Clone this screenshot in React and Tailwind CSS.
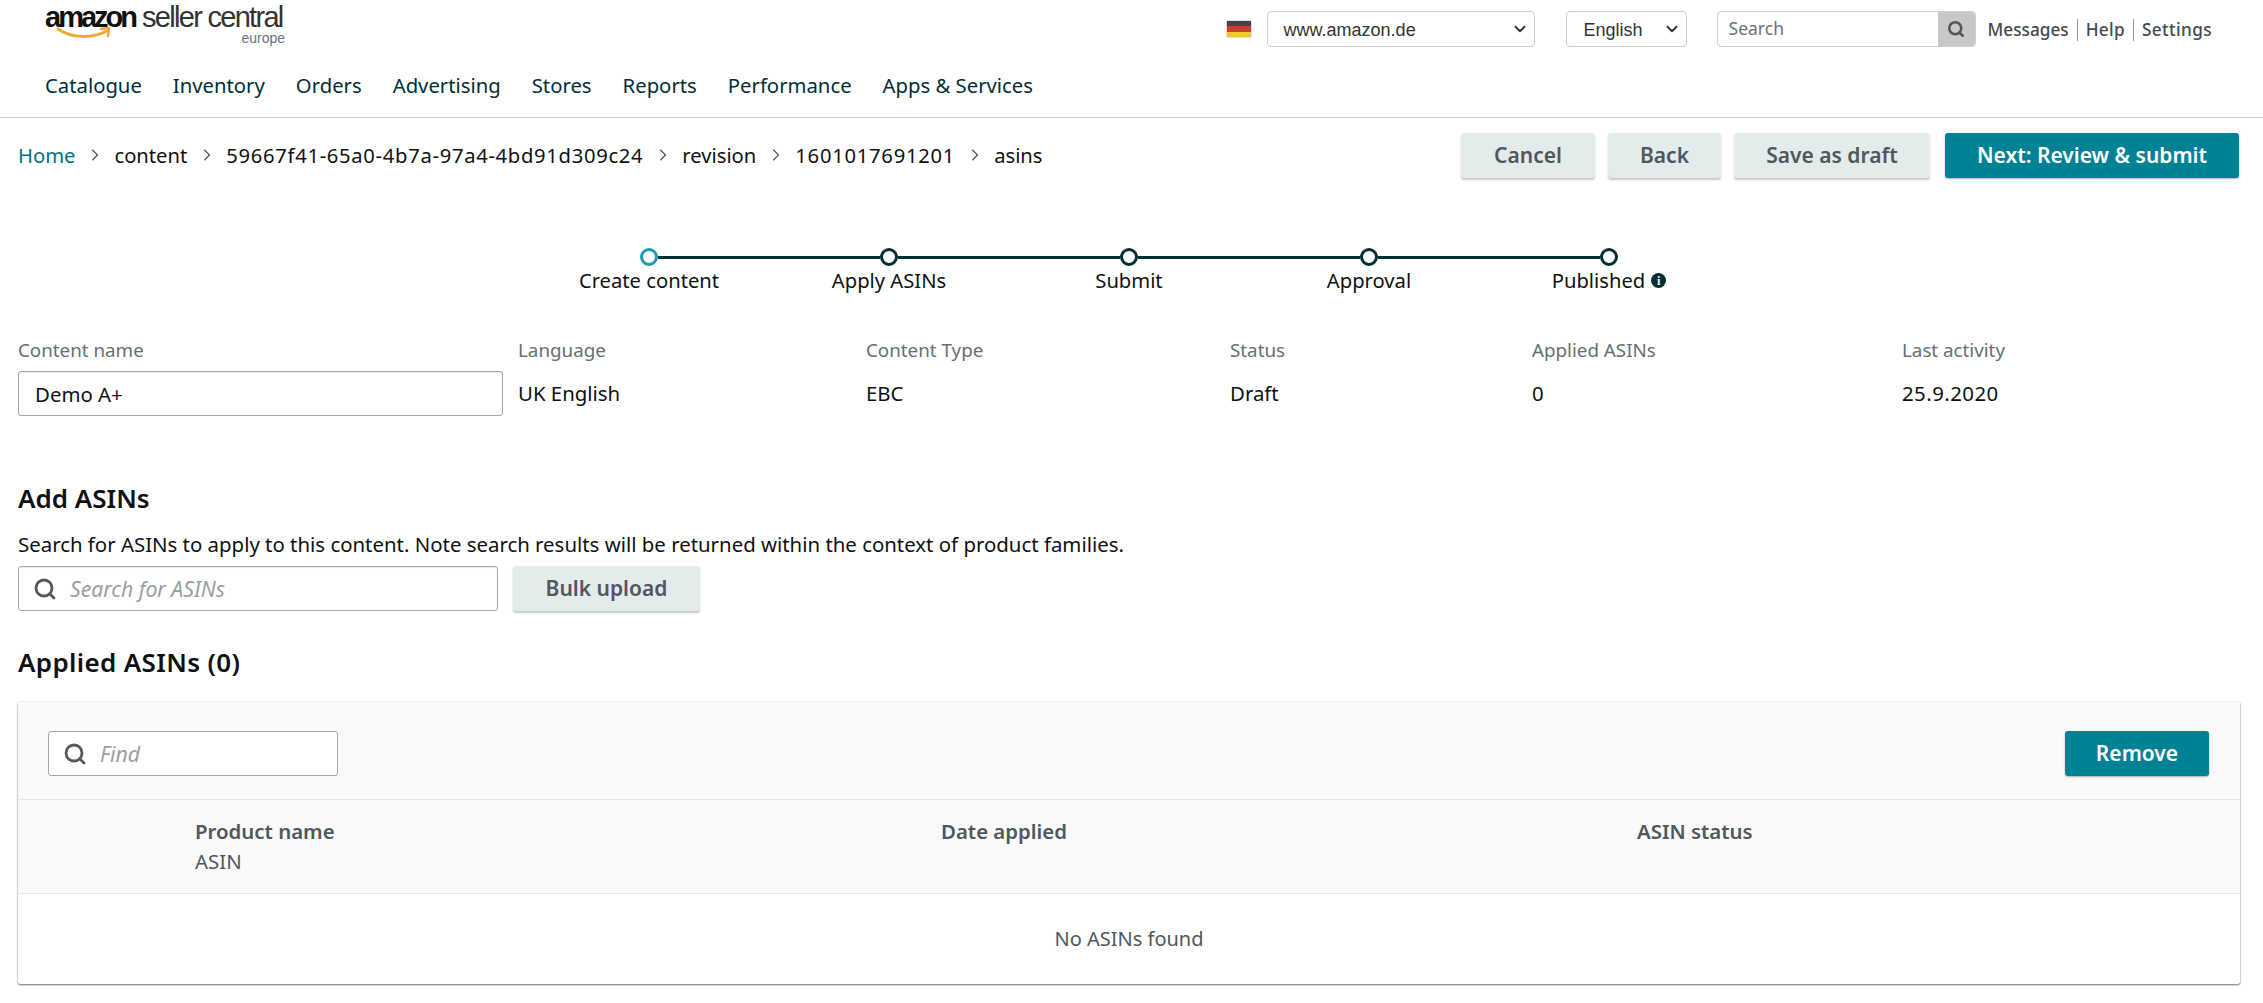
import React from 'react';
import { ChevronDown, ChevronRight, Search } from 'lucide-react';

const navItems = ['Catalogue', 'Inventory', 'Orders', 'Advertising', 'Stores', 'Reports', 'Performance', 'Apps & Services'];
const crumbs = [
  ['content', ''],
  ['59667f41-65a0-4b7a-97a4-4bd91d309c24', 'tracking-[0.7px]'],
  ['revision', ''],
  ['1601017691201', 'tracking-[0.75px]'],
  ['asins', ''],
];
const steps = ['Create content', 'Apply ASINs', 'Submit', 'Approval', 'Published'];
const meta = [
  ['Language', 'UK English', ''],
  ['Content Type', 'EBC', ''],
  ['Status', 'Draft', ''],
  ['Applied ASINs', '0', ''],
  ['Last activity', '25.9.2020', 'tracking-[0.45px]'],
];

function Logo() {
  return (
    <div className="relative h-[46px] w-[240px] select-none font-['Liberation_Sans',sans-serif] leading-none">
      <div className="flex items-baseline whitespace-nowrap pt-[3px]">
        <span className="text-[29px] font-bold tracking-[-3px] text-[#111]">amazon</span>
        <span className="ml-[7px] text-[29px] tracking-[-1.7px] text-[#333]">seller central</span>
      </div>
      <svg className="absolute left-[12px] top-[27px]" width="56" height="14" viewBox="0 0 56 14" fill="none">
        <path d="M1 2 C 14 11, 34 12, 50 4" stroke="#f0a830" strokeWidth="3" strokeLinecap="round" />
        <path d="M44 2 L52 1 L51 9" stroke="#f0a830" strokeWidth="2.4" strokeLinecap="round" strokeLinejoin="round" />
      </svg>
      <span className="absolute right-0 top-[31px] text-[14px] text-[#6b7280]">europe</span>
    </div>
  );
}

function GrayButton({ children, className }) {
  return (
    <button className={`h-[45px] rounded-[3px] bg-[#e3ebeb] text-[21px] font-semibold text-[#50585c] shadow-[0_2px_2px_rgba(0,0,0,0.22)] ${className}`}>
      {children}
    </button>
  );
}

function TealButton({ children, className }) {
  return (
    <button className={`h-[45px] rounded-[3px] bg-[#008296] text-[21px] font-semibold text-white shadow-[0_1px_2px_rgba(0,0,0,0.3)] ${className}`}>
      {children}
    </button>
  );
}

export default function App() {
  return (
    <div className="min-h-[1003px] bg-white font-['Noto_Sans',sans-serif] text-[20.2px] text-[#0f1111]">
      <header className="h-[118px] border-b border-[#cfd2d2]">
        <div className="flex h-[59px] items-start pl-[45px] pr-[51px]">
          <Logo />
          <div className="ml-auto flex items-center pt-[11px]">
            <div className="flex h-[16px] w-[24px] flex-col overflow-hidden shadow-[0_0_1px_#555]">
              <div className="h-1/3 bg-[#444]" />
              <div className="h-1/3 bg-[#d6392b]" />
              <div className="h-1/3 bg-[#f2c53d]" />
            </div>
            <div className="ml-[16px] flex h-[36px] w-[268px] items-center justify-between rounded-[4px] border border-[#cfcfcf] bg-white pl-[16px] pr-[5px] font-['Liberation_Sans',sans-serif] text-[18px] text-[#333]">
              <span className="mt-[2px]">www.amazon.de</span>
              <ChevronDown size={18} strokeWidth={2.6} />
            </div>
            <div className="ml-[31px] flex h-[36px] w-[121px] items-center justify-between rounded-[4px] border border-[#cfcfcf] bg-white pl-[17px] pr-[5px] font-['Liberation_Sans',sans-serif] text-[18px] text-[#333]">
              <span className="mt-[2px]">English</span>
              <ChevronDown size={18} strokeWidth={2.6} />
            </div>
            <div className="ml-[30px] flex h-[36px] w-[259px] overflow-hidden rounded-[4px] border border-[#cfcfcf]">
              <span className="flex-1 pl-[11px] text-[17.5px] leading-[32px] text-[#6c7373]">Search</span>
              <span className="flex w-[37px] items-center justify-center bg-[#c8c8c8]">
                <Search size={18} strokeWidth={3.4} className="text-[#555]" />
              </span>
            </div>
            <div className="ml-[12px] mt-[2px] flex items-center text-[17.2px] font-medium text-[#444b4f]">
              <span className="pr-[8px]">Messages</span>
              <span className="border-l border-[#999] px-[8px] leading-[22px] tracking-[0.3px]">Help</span>
              <span className="border-l border-[#999] pl-[8px] leading-[22px] tracking-[0.4px]">Settings</span>
            </div>
          </div>
        </div>
        <nav className="flex gap-[31px] pl-[45px] pt-[11px] text-[20.3px] text-[#002f36]">
          {navItems.map(item => <span key={item}>{item}</span>)}
        </nav>
      </header>

      <div className="flex items-center justify-between pl-[18px] pr-[24px] pt-[15px]">
        <div className="flex items-center">
          <span className="text-[#007185]">Home</span>
          {crumbs.map(([c, extra]) => (
            <React.Fragment key={c}>
              <ChevronRight size={20} strokeWidth={1.4} className="mx-[9.5px] text-[#555]" />
              <span className={extra}>{c}</span>
            </React.Fragment>
          ))}
        </div>
        <div className="flex gap-[13px]">
          <GrayButton className="w-[134px]">Cancel</GrayButton>
          <GrayButton className="w-[113px]">Back</GrayButton>
          <GrayButton className="w-[196px]">Save as draft</GrayButton>
          <TealButton className="ml-[2px] w-[294px]">Next: Review &amp; submit</TealButton>
        </div>
      </div>

      <div className="ml-[640px] mt-[70px] flex w-[978px] items-center">
        {steps.map((s, i) => (
          <React.Fragment key={s}>
            <span className={`h-[18px] w-[18px] shrink-0 rounded-full border-[3px] bg-white ${i === 0 ? 'border-[#1b9db0]' : 'border-[#002f36]'}`} />
            {i < steps.length - 1 && <span className="h-[3px] flex-1 bg-[#002f36]" />}
          </React.Fragment>
        ))}
      </div>
      <div className="ml-[529px] grid w-[1200px] grid-cols-5 text-center leading-[28px]">
        {steps.map((s, i) => (
          <div key={s} className="flex items-center justify-center gap-[6px]">
            {s}
            {i === 4 && (
              <span className="mt-[1px] flex h-[15px] w-[15px] items-center justify-center rounded-full bg-[#002f36] font-['Liberation_Serif',serif] text-[12px] font-bold leading-none text-white">i</span>
            )}
          </div>
        ))}
      </div>

      <div className="mt-[42px] grid grid-cols-[500px_348px_364px_302px_370px_1fr] pl-[18px]">
        <div>
          <div className="h-[29px] text-[18.8px] leading-[28px] text-[#667071]">Content name</div>
          <input readOnly value="Demo A+" className="mt-[6px] h-[45px] w-[485px] rounded-[3px] border border-[#a6a6a6] bg-white px-[16px] text-[20.4px] shadow-[inset_0_1px_1px_rgba(0,0,0,0.08)] outline-none" />
        </div>
        {meta.map(([label, value, extra]) => (
          <div key={label}>
            <div className="h-[29px] text-[18.8px] leading-[28px] text-[#667071]">{label}</div>
            <div className={`mt-[6px] flex h-[45px] items-center text-[20.4px] ${extra}`}>{value}</div>
          </div>
        ))}
      </div>

      <div className="px-[18px]">
        <h2 className="mt-[64px] text-[26px] font-semibold leading-[36px]">Add ASINs</h2>
        <p className="mt-[14px] text-[20.4px] leading-[28px]">Search for ASINs to apply to this content. Note search results will be returned within the context of product families.</p>
        <div className="mt-[8px] flex gap-[15px]">
          <div className="flex h-[45px] w-[480px] items-center rounded-[3px] border border-[#a6a6a6] bg-white pl-[14px] shadow-[inset_0_1px_1px_rgba(0,0,0,0.08)]">
            <Search size={24} strokeWidth={2.8} className="text-[#565959]" />
            <span className="ml-[13px] text-[21.2px] italic text-[#999f9f]">Search for ASINs</span>
          </div>
          <GrayButton className="w-[187px]">Bulk upload</GrayButton>
        </div>
        <h2 className="mt-[33px] text-[26px] font-semibold leading-[36px] tracking-[0.35px]">Applied ASINs (0)</h2>

        <div className="mt-[22px] w-[2222px] overflow-hidden rounded-[2px] bg-white shadow-[0_1px_2px_rgba(0,0,0,0.55),0_0_1px_rgba(0,0,0,0.35)]">
          <div className="flex h-[98px] items-start justify-between border-b border-[#e7e7e7] bg-[#fafafa] pl-[30px] pr-[31px] pt-[29px]">
            <div className="flex h-[45px] w-[290px] items-center rounded-[3px] border border-[#a6a6a6] bg-white pl-[14px]">
              <Search size={24} strokeWidth={2.8} className="text-[#565959]" />
              <span className="ml-[13px] text-[21.2px] italic text-[#999f9f]">Find</span>
            </div>
            <TealButton className="w-[144px]">Remove</TealButton>
          </div>
          <div className="grid h-[94px] grid-cols-[746px_696px_1fr] border-b border-[#e7e7e7] bg-[#fafafa] pl-[177px] pt-[16px] text-[20.4px] leading-[30px] text-[#50585c]">
            <div>
              <div className="font-semibold">Product name</div>
              <div>ASIN</div>
            </div>
            <div className="font-semibold">Date applied</div>
            <div className="font-semibold">ASIN status</div>
          </div>
          <div className="flex h-[90px] items-center justify-center text-[20px] text-[#50585c]">No ASINs found</div>
        </div>
      </div>
    </div>
  );
}
